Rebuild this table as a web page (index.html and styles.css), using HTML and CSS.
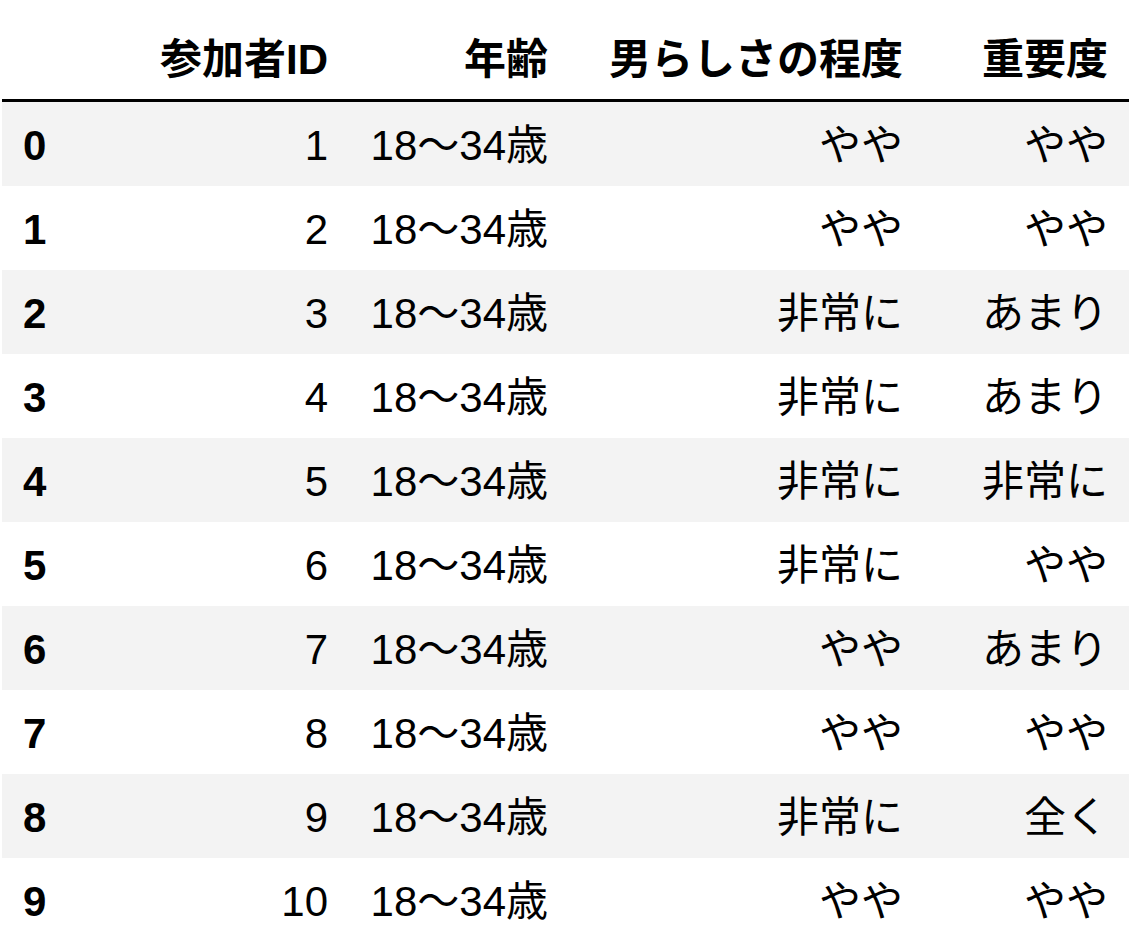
FILE: index.html
```html
<!DOCTYPE html>
<html lang="ja">
<head>
<meta charset="utf-8">
<link rel="stylesheet" href="styles.css">
</head>
<body>
<table class="df">
  <colgroup>
    <col class="c-idx">
    <col class="c-id">
    <col class="c-age">
    <col class="c-masc">
    <col class="c-imp">
  </colgroup>
  <thead>
    <tr>
      <th></th>
      <th>参加者ID</th>
      <th>年齢</th>
      <th>男らしさの程度</th>
      <th>重要度</th>
    </tr>
  </thead>
  <tbody>
    <tr><th>0</th><td>1</td><td>18〜34歳</td><td>やや</td><td>やや</td></tr>
    <tr><th>1</th><td>2</td><td>18〜34歳</td><td>やや</td><td>やや</td></tr>
    <tr><th>2</th><td>3</td><td>18〜34歳</td><td>非常に</td><td>あまり</td></tr>
    <tr><th>3</th><td>4</td><td>18〜34歳</td><td>非常に</td><td>あまり</td></tr>
    <tr><th>4</th><td>5</td><td>18〜34歳</td><td>非常に</td><td>非常に</td></tr>
    <tr><th>5</th><td>6</td><td>18〜34歳</td><td>非常に</td><td>やや</td></tr>
    <tr><th>6</th><td>7</td><td>18〜34歳</td><td>やや</td><td>あまり</td></tr>
    <tr><th>7</th><td>8</td><td>18〜34歳</td><td>やや</td><td>やや</td></tr>
    <tr><th>8</th><td>9</td><td>18〜34歳</td><td>非常に</td><td>全く</td></tr>
    <tr><th>9</th><td>10</td><td>18〜34歳</td><td>やや</td><td>やや</td></tr>
  </tbody>
</table>
</body>
</html>
```

FILE: styles.css
```css
html, body {
  margin: 0;
  padding: 0;
  background: #ffffff;
}

body {
  font-family: "Liberation Sans", "Noto Sans CJK JP", sans-serif;
  font-size: 42px;
  color: #000000;
}

.df {
  margin: 2px 0 0 2px;
  border-collapse: collapse;
  border-spacing: 0;
  table-layout: fixed;
  width: 1127px;
}

.c-idx { width: 134px; }
.c-id { width: 213px; }
.c-age { width: 220px; }
.c-masc { width: 355px; }
.c-imp { width: 205px; }

.df th,
.df td {
  text-align: right;
  vertical-align: middle;
  padding: 23px 21px 19px;
  line-height: 42px;
  white-space: nowrap;
}

.df thead th {
  padding-top: 37px;
  padding-bottom: 18px;
  font-weight: bold;
  vertical-align: bottom;
  border-bottom: 3px solid #000000;
}

.df tbody th {
  text-align: left;
  font-weight: bold;
}

.df tbody tr:nth-child(odd) {
  background: #f3f3f3;
}
```
